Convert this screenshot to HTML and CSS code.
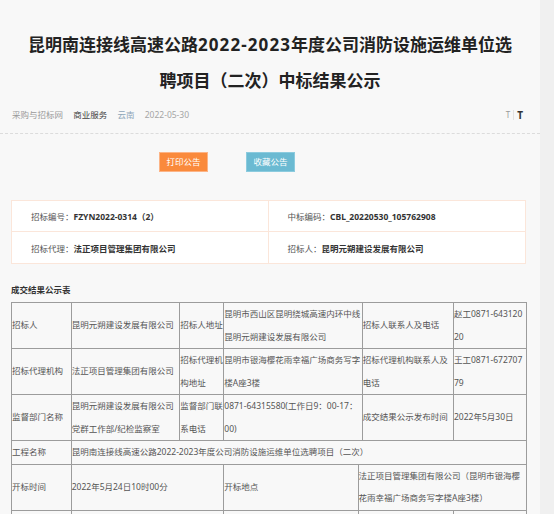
FILE: index.html
```html
<!DOCTYPE html>
<html lang="zh-CN">
<head>
<meta charset="utf-8">
<title>中标结果公示</title>
<link rel="stylesheet" href="styles.css">
</head>
<body>
<div class="page">
  <h1 class="title">昆明南连接线高速公路<span class="num">2022-2023</span>年度公司消防设施运维单位选聘项目（二次）中标结果公示</h1>
  <div class="meta">
    <div class="crumbs">
      <span class="src">采购与招标网</span>
      <span class="cat">商业服务</span>
      <span class="region">云南</span>
      <span class="date">2022-05-30</span>
    </div>
    <div class="fontsize"><span class="t-small">T</span><span class="sep"></span><span class="t-big">T</span></div>
  </div>
  <div class="actions">
    <button class="btn btn-print">打印公告</button>
    <button class="btn btn-fav">收藏公告</button>
  </div>
  <div class="info">
    <div class="cell c-left r-top"><span class="lbl">招标编号：</span><span class="val">FZYN2022-0314（2）</span></div>
    <div class="cell r-top"><span class="lbl">中标编码：</span><span class="val">CBL_20220530_105762908</span></div>
    <div class="cell c-left"><span class="lbl">招标代理：</span><span class="val">法正项目管理集团有限公司</span></div>
    <div class="cell"><span class="lbl">招标人：</span><span class="val">昆明元朔建设发展有限公司</span></div>
  </div>
  <div class="sec-title">成交结果公示表</div>
  <table class="result">
    <colgroup>
      <col class="w1"><col class="w2"><col class="w3"><col class="w4"><col class="w5"><col class="w6"><col class="w7">
    </colgroup>
    <tr>
      <td>招标人</td>
      <td>昆明元朔建设发展有限公司</td>
      <td>招标人地址</td>
      <td colspan="2">昆明市西山区昆明绕城高速内环中线昆明元朔建设发展有限公司</td>
      <td>招标人联系人及电话</td>
      <td>赵工0871-64312020</td>
    </tr>
    <tr>
      <td>招标代理机构</td>
      <td>法正项目管理集团有限公司</td>
      <td>招标代理机构地址</td>
      <td colspan="2">昆明市银海樱花雨幸福广场商务写字楼A座3楼</td>
      <td>招标代理机构联系人及电话</td>
      <td>王工0871-67270779</td>
    </tr>
    <tr>
      <td>监督部门名称</td>
      <td>昆明元朔建设发展有限公司党群工作部/纪检监察室</td>
      <td>监督部门联系电话</td>
      <td colspan="2">0871-64315580(工作日9：00-17：00)</td>
      <td>成交结果公示发布时间</td>
      <td>2022年5月30日</td>
    </tr>
    <tr>
      <td>工程名称</td>
      <td colspan="6">昆明南连接线高速公路2022-2023年度公司消防设施运维单位选聘项目（二次）</td>
    </tr>
    <tr>
      <td>开标时间</td>
      <td colspan="2">2022年5月24日10时00分</td>
      <td>开标地点</td>
      <td colspan="3">法正项目管理集团有限公司（昆明市银海樱花雨幸福广场商务写字楼A座3楼）</td>
    </tr>
    <tr class="row-next">
      <td></td>
      <td colspan="2"></td>
      <td></td>
      <td colspan="2"></td>
      <td></td>
    </tr>
  </table>
</div>
</body>
</html>
```

FILE: styles.css
```css
* {
  box-sizing: border-box;
}

html, body {
  margin: 0;
  padding: 0;
}

body {
  background: #f0f0f0;
  font-family: "Noto Sans", "Noto Sans CJK SC", sans-serif;
  color: #555;
  overflow: hidden;
}

.page {
  width: 540px;
  min-height: 514px;
  background: #f8f8f8;
}

.title {
  margin: 0 auto;
  padding-top: 27px;
  max-width: 492px;
  font-size: 17px;
  line-height: 36px;
  font-weight: bold;
  color: #222;
  text-align: center;
}

.title .num {
  letter-spacing: 1.1px;
}

.meta {
  display: flex;
  justify-content: space-between;
  align-items: center;
  margin-top: 8px;
  padding: 0 17px 10px 12px;
  border-bottom: 1px dashed #dcdcdc;
  font-size: 8.5px;
  line-height: 16px;
}

.crumbs span {
  margin-right: 8px;
}

.crumbs .src {
  color: #9a9a9a;
}

.crumbs .cat {
  color: #444;
}

.crumbs .region {
  color: #8fa6b8;
}

.crumbs .date {
  color: #a5a5a5;
}

.fontsize {
  display: flex;
  align-items: center;
  gap: 3px;
}

.t-small {
  font-size: 8px;
  color: #999;
}

.sep {
  width: 1px;
  height: 10px;
  background: #e2e2e2;
}

.t-big {
  font-size: 10px;
  font-weight: bold;
  color: #333;
}

.actions {
  display: flex;
  gap: 38px;
  margin-top: 18px;
  padding-left: 159px;
}

.btn {
  width: 49px;
  height: 20px;
  padding: 0;
  border: 1px solid transparent;
  font-family: inherit;
  font-size: 8.5px;
  color: #fff;
  line-height: 18px;
  text-align: center;
}

.btn-print {
  background: #fa8a3c;
  border-color: #fcb486;
}

.btn-fav {
  background: #6bbad2;
  border-color: #8ccbde;
}

.info {
  display: grid;
  grid-template-columns: 1fr 1fr;
  width: 515px;
  margin: 28px 0 0 11px;
  background: #fff;
  border: 1px solid #fbe6da;
}

.info .cell {
  height: 31px;
  padding-left: 19px;
  display: flex;
  align-items: center;
  font-size: 8.5px;
}

.info .c-left {
  border-right: 1px solid #fbe6da;
}

.info .r-top {
  border-bottom: 1px solid #fbe6da;
}

.info .lbl {
  color: #555;
}

.info .val {
  color: #333;
  font-weight: bold;
}

.sec-title {
  margin: 18px 0 4px 11px;
  font-size: 8.5px;
  line-height: 16px;
  font-weight: bold;
  color: #333;
}

.result {
  margin-left: 11px;
  width: 515px;
  table-layout: fixed;
  border-collapse: collapse;
  font-size: 8.5px;
  color: #555;
}

.result col.w1 { width: 59.7px; }
.result col.w2 { width: 108.6px; }
.result col.w3 { width: 44px; }
.result col.w4 { width: 134.3px; }
.result col.w5 { width: 4.1px; }
.result col.w6 { width: 91.3px; }
.result col.w7 { width: 73px; }

.result td {
  border: 1px solid #9c9c9c;
  padding: 0;
  line-height: 22.5px;
  vertical-align: middle;
  text-align: left;
  word-break: break-all;
}

.result .row-next td {
  height: 45px;
}
```
